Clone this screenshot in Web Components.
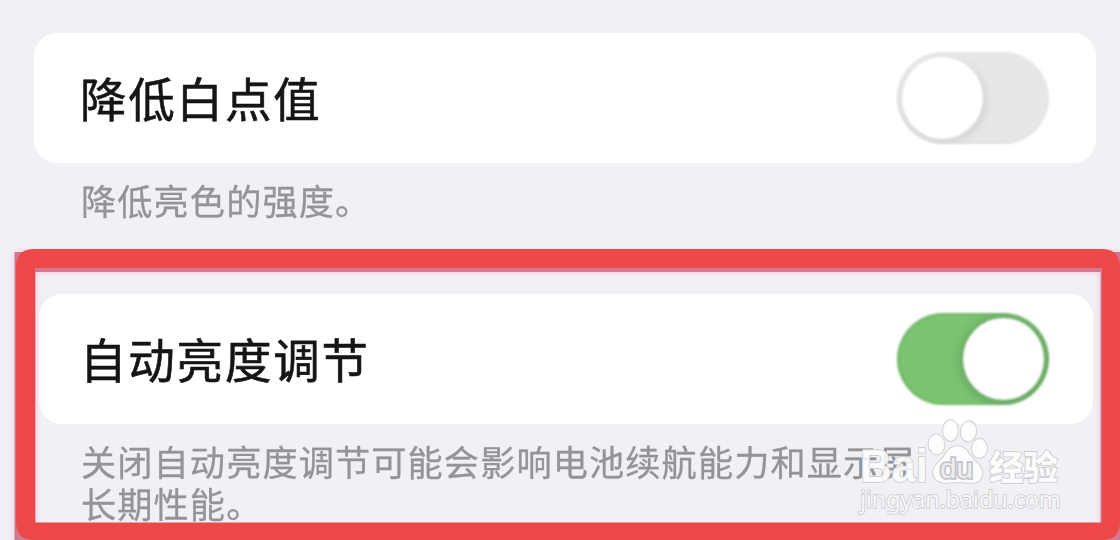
<!DOCTYPE html>
<html lang="zh-CN">
<head>
<meta charset="UTF-8">
<title>显示设置</title>
<style>
  body {
    margin: 0;
    width: 1120px;
    height: 540px;
    overflow: hidden;
    position: relative;
    background: #f1f1f5;
    font-family: "Noto Sans CJK SC", sans-serif;
  }
  main {
    display: flex;
    flex-direction: column;
    padding: 33px 24px 0 34px;
  }
  .inset {
    --row-margin: 0 3px 0 5px;
    --row-padding: 0 44px 0 41px;
  }
</style>
</head>
<body>
<main>
  <setting-group style="--group-height: 261px">
    <setting-row>降低白点值<toggle-switch slot="control"></toggle-switch></setting-row>
    <span slot="note">降低亮色的强度。</span>
  </setting-group>
  <setting-group class="inset" style="--group-height: 246px">
    <setting-row>自动亮度调节<toggle-switch slot="control" checked></toggle-switch></setting-row>
    <span slot="note">关闭自动亮度调节可能会影响电池续航能力和显示屏<br>长期性能。</span>
  </setting-group>
</main>
<site-mark></site-mark>
<mark-frame></mark-frame>

<script>
class SettingGroup extends HTMLElement {
  constructor() {
    super();
    this.attachShadow({ mode: "open" });
    this.shadowRoot.innerHTML = `
      <style>
        :host {
          display: flex;
          flex-direction: column;
          height: var(--group-height);
        }
        .note {
          padding: 16px 0 0 47px;
          color: #949498;
          font-size: 35.2px;
          line-height: 42px;
          letter-spacing: 1.1px;
          white-space: nowrap;
          -webkit-text-stroke: 0.3px #949498;
          filter: blur(0.7px);
        }
      </style>
      <slot></slot>
      <div class="note"><slot name="note"></slot></div>
    `;
  }
}

class SettingRow extends HTMLElement {
  constructor() {
    super();
    this.attachShadow({ mode: "open" });
    this.shadowRoot.innerHTML = `
      <style>
        :host {
          display: flex;
          align-items: center;
          justify-content: space-between;
          box-sizing: border-box;
          flex: none;
          height: 130px;
          margin: var(--row-margin, 0);
          padding: var(--row-padding, 0 47px 0 46px);
          border-radius: 23px;
          background: #fff;
        }
        .label {
          padding-bottom: 2px;
          color: #151515;
          font-size: 46.5px;
          line-height: 60px;
          letter-spacing: 1.8px;
          -webkit-text-stroke: 0.6px #151515;
          filter: blur(0.7px);
        }
      </style>
      <div class="label"><slot></slot></div>
      <slot name="control"></slot>
    `;
  }
}

class ToggleSwitch extends HTMLElement {
  constructor() {
    super();
    this.attachShadow({ mode: "open" });
    this.shadowRoot.innerHTML = `
      <style>
        :host {
          display: flex;
          align-items: center;
          box-sizing: border-box;
          width: 152px;
          height: 92px;
          padding: 0 5px;
          border-radius: 46px;
          background: #e7e7e7;
          overflow: hidden;
          filter: blur(0.8px);
          box-shadow: inset 1px -1px 3px #dadada;
        }
        :host([checked]) {
          justify-content: flex-end;
          background: #7bc470;
          box-shadow: inset 0 0 4px #69a766;
        }
        .knob {
          width: 81px;
          height: 82px;
          border-radius: 50%;
          background: #fff;
          box-shadow: 3px 3px 9px rgba(0, 0, 0, 0.1);
        }
        :host([checked]) .knob {
          box-shadow: 0 1px 10px 3px rgba(70, 100, 80, 0.35);
        }
      </style>
      <div class="knob"></div>
    `;
  }
}

// red highlight box with the fainter pink edge behind it
class MarkFrame extends HTMLElement {
  constructor() {
    super();
    this.attachShadow({ mode: "open" });
    this.shadowRoot.innerHTML = `
      <style>
        :host { display: block; position: absolute; inset: 0; }
        svg { display: block; }
      </style>
      <svg width="1120" height="540" viewBox="0 0 1120 540">
        <defs>
          <filter id="soft" x="-5%" y="-5%" width="110%" height="110%"><feGaussianBlur stdDeviation="3"/></filter>
          <filter id="edge" x="-5%" y="-5%" width="110%" height="110%"><feGaussianBlur stdDeviation="0.7"/></filter>
        </defs>
        <path d="M14 251H1130V550H14ZM36 273V550H1100V273Z" fill="#ffb9d2" fill-rule="evenodd" opacity=".65" filter="url(#soft)"/>
        <path d="M14.5 252H1130V550H14.5ZM35.5 272V550H1100.5V272Z" fill="#d27892" fill-rule="evenodd" filter="url(#edge)"/>
        <path d="M34 249H1102Q1120 249 1120 267V522Q1120 540 1102 540H34Q16 540 16 522V267Q16 249 34 249ZM35 268V522.5H1102V268Z" fill="#ec4848" fill-rule="evenodd"/>
      </svg>
    `;
  }
}

class SiteMark extends HTMLElement {
  constructor() {
    super();
    this.attachShadow({ mode: "open" });
    this.shadowRoot.innerHTML = `
      <style>
        :host { display: block; position: absolute; left: 850px; top: 410px; }
        svg { display: block; }
        text { font-family: "Liberation Sans", sans-serif; }
        .cjk { font-family: "Noto Sans CJK SC", sans-serif; }
        .url { font-family: "Noto Sans", sans-serif; }
      </style>
      <svg width="240" height="112" viewBox="850 410 240 112">
        <g fill="#fff" fill-opacity=".85" stroke="#cbcbcf" stroke-width="1.6" paint-order="stroke">
          <text x="860" y="481.500" font-size="46" font-weight="700" textLength="68" lengthAdjust="spacingAndGlyphs">Bai</text>
          <ellipse cx="936.5" cy="444.500" rx="8" ry="10" transform="rotate(-8 936.5 444.5)"/>
          <ellipse cx="950.5" cy="430.500" rx="7.5" ry="10.5"/>
          <ellipse cx="968.5" cy="431.500" rx="7.8" ry="10.2" transform="rotate(8 968.5 431.5)"/>
          <ellipse cx="979.5" cy="448.500" rx="7.7" ry="9.7"/>
          <path d="M957.500 446C964 446 967 450 970 455C975 462 982 465 982.500 473C983 480 977 483.500 970 483C964 482 951 482 946 483C938 483 933 479 933 472C933 465 941 461 945 455C948 449 952 446 957.500 446Z"/>
          <text class="cjk" x="989" y="479.500" font-size="34" font-weight="900" textLength="69" lengthAdjust="spacingAndGlyphs">经验</text>
          <text class="url" x="860" y="508" font-size="24" textLength="201">jingyan.baidu.com</text>
        </g>
        <text x="940" y="477.500" font-size="28" fill="#eeeef0" stroke="#c4c4c8" stroke-width="3.4" paint-order="stroke" textLength="33" lengthAdjust="spacingAndGlyphs">du</text>
      </svg>
    `;
  }
}

customElements.define("setting-group", SettingGroup);
customElements.define("setting-row", SettingRow);
customElements.define("toggle-switch", ToggleSwitch);
customElements.define("mark-frame", MarkFrame);
customElements.define("site-mark", SiteMark);
</script>
</body>
</html>
